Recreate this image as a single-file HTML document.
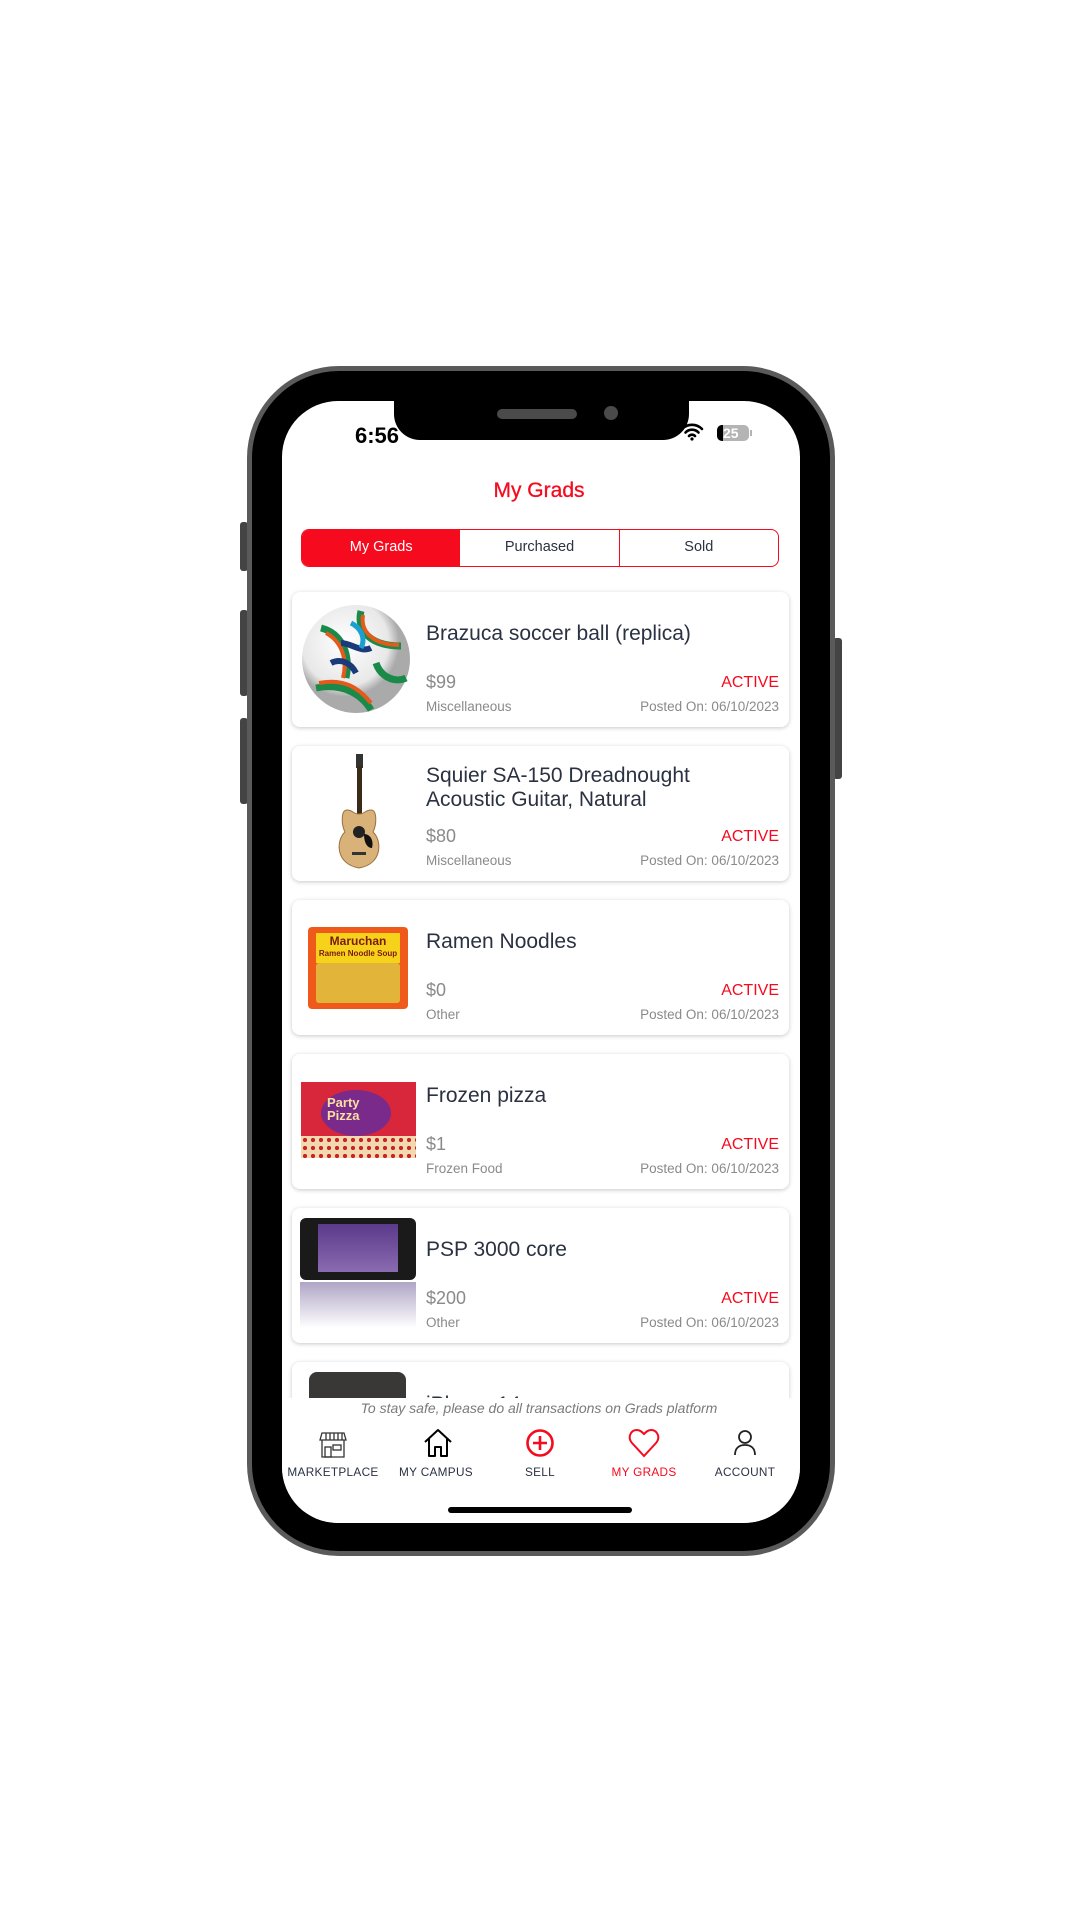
<!DOCTYPE html>
<html><head><meta charset="utf-8"><style>
*{margin:0;padding:0;box-sizing:border-box}
body{width:1080px;height:1920px;background:#fff;position:relative;overflow:hidden;font-family:"Liberation Sans",sans-serif}
.abs{position:absolute}
.frame{left:247px;top:366px;width:588px;height:1190px;border-radius:92px;background:#000;border:5px solid #5a5a5a}
.btn{background:#444;border-radius:3px}
.screen{left:282px;top:401px;width:518px;height:1122px;border-radius:56px;background:#fff;overflow:hidden}
.notch{left:112px;top:-2px;width:295px;height:41px;background:#000;border-radius:0 0 26px 26px}
.card{left:11px;width:497px;height:135px;background:#fff;border-radius:8px;box-shadow:0 1px 4px rgba(0,0,0,.22)}
.t{left:134px;font-size:21px;color:#2a3242;line-height:24px}
.p{left:134px;top:80px;font-size:18px;color:#8a8a8a}
.c{left:134px;top:107px;font-size:13.5px;color:#8a8a8a}
.a{right:10px;top:82px;font-size:16px;color:#f50a1e}
.d{right:10px;top:107px;font-size:13.5px;color:#8a8a8a}
.lbl{top:1064px;width:110px;text-align:center;font-size:11.8px;color:#2a3242;letter-spacing:.3px}
</style></head><body>
<div class="abs btn" style="left:240px;top:522px;width:8px;height:49px"></div>
<div class="abs btn" style="left:240px;top:610px;width:8px;height:86px"></div>
<div class="abs btn" style="left:240px;top:718px;width:8px;height:86px"></div>
<div class="abs btn" style="left:833px;top:638px;width:9px;height:141px"></div>
<div class="abs frame"></div>
<div class="abs screen">
 <div class="abs notch">
  <div class="abs" style="left:103px;top:10px;width:80px;height:10px;border-radius:5px;background:#4a4a4a"></div>
  <div class="abs" style="left:210px;top:7px;width:14px;height:14px;border-radius:7px;background:#4a4a4a"></div>
 </div>
 <div class="abs" style="left:73px;top:22px;font-size:22px;font-weight:bold;color:#000">6:56</div>
 <svg class="abs" style="left:398px;top:22px" width="24" height="18" viewBox="0 0 24 18"><path d="M2 6a14 14 0 0 1 20 0M5.5 9.5a9 9 0 0 1 13 0M9 13a4 4 0 0 1 6 0" stroke="#000" stroke-width="2.6" fill="none" stroke-linecap="round"/><circle cx="12" cy="16" r="1.6"/></svg>
 <div class="abs" style="left:435px;top:24px;width:32px;height:16px;border-radius:5px;background:#b4b4b4;overflow:hidden"><div style="width:6px;height:16px;background:#000"></div><div class="abs" style="left:6px;top:0;font-size:14px;font-weight:bold;color:#fff;line-height:16px">25</div></div>
 <div class="abs" style="left:468px;top:29px;width:2px;height:6px;background:#b4b4b4"></div>

 <div class="abs" style="left:-2px;width:518px;top:78px;text-align:center;font-size:21px;color:#f50a1e;-webkit-text-stroke:0.3px #f50a1e">My Grads</div>
 <div class="abs" style="left:19px;top:128px;width:478px;height:38px;border:1.5px solid #f50a1e;border-radius:8px;overflow:hidden;display:flex;font-size:14.5px;color:#2a3242">
  <div style="flex:1;background:#f50a1e;color:#fff;text-align:center;line-height:35px">My Grads</div>
  <div style="flex:1;text-align:center;line-height:35px;border-right:1.5px solid #f50a1e">Purchased</div>
  <div style="flex:1;text-align:center;line-height:35px">Sold</div>
 </div>

 <div class="abs" style="left:-1px;top:0;width:518px;height:997px;overflow:hidden">
 <div class="abs card" style="top:191px">
  <svg class="abs" style="left:9px;top:11px" width="110" height="112" viewBox="0 0 110 112"><defs><radialGradient id="g" cx="40%" cy="35%"><stop offset="0" stop-color="#fff"/><stop offset=".8" stop-color="#e8e8e8"/><stop offset="1" stop-color="#aaa"/></radialGradient></defs><circle cx="55" cy="56" r="54" fill="url(#g)"/><path d="M20 25c20 5 30 25 25 50M60 8c-5 20 10 35 40 35M15 85c25-5 45 5 55 22M75 60c5 15 20 20 30 15" stroke="#1a8a4a" stroke-width="7" fill="none"/><path d="M25 30c15 8 22 25 17 45M62 12c-3 18 12 30 36 30M18 80c25-5 40 5 52 20" stroke="#e35a1a" stroke-width="4" fill="none"/><path d="M40 40c10 0 20 10 30 5M30 60c10-5 20 0 25 10" stroke="#1a3a7a" stroke-width="6" fill="none"/><path d="M50 20c10 5 15 15 10 25" stroke="#1aa0d0" stroke-width="5" fill="none"/></svg>
  <div class="abs t" style="top:30px">Brazuca soccer ball (replica)</div>
  <div class="abs p">$99</div><div class="abs c">Miscellaneous</div>
  <div class="abs a">ACTIVE</div><div class="abs d">Posted On: 06/10/2023</div>
 </div>
 <div class="abs card" style="top:345px">
  <svg class="abs" style="left:42px;top:8px" width="50" height="118" viewBox="0 0 50 118"><rect x="22" y="0" width="7" height="14" fill="#333"/><rect x="23" y="12" width="5" height="48" fill="#3a2a1a"/><path d="M13 56c-6 0-6 14-2 22-9 8-10 32 14 36 24-4 23-28 14-36 4-8 4-22-2-22-6 0-6 4-12 4s-6-4-12-4z" fill="#d9b27a" stroke="#9a7040"/><circle cx="25" cy="78" r="6" fill="#222"/><path d="M30 80c6 0 10 6 8 14-4 0-8-4-8-14z" fill="#111"/><rect x="18" y="98" width="14" height="3" fill="#333"/></svg>
  <div class="abs t" style="top:18px">Squier SA-150 Dreadnought<br>Acoustic Guitar, Natural</div>
  <div class="abs p">$80</div><div class="abs c">Miscellaneous</div>
  <div class="abs a">ACTIVE</div><div class="abs d">Posted On: 06/10/2023</div>
 </div>
 <div class="abs card" style="top:499px">
  <div class="abs" style="left:16px;top:27px;width:100px;height:82px;background:#ef5a1a;border-radius:4px">
   <div class="abs" style="left:8px;top:6px;width:84px;height:30px;background:#f6d21a;font-size:12px;font-weight:bold;color:#7a1a10;text-align:center;line-height:11px;padding-top:3px">Maruchan<br><span style="font-size:8px">Ramen Noodle Soup</span></div>
   <div class="abs" style="left:8px;top:36px;width:84px;height:40px;background:#e3b43a;border-radius:3px"></div>
  </div>
  <div class="abs t" style="top:30px">Ramen Noodles</div>
  <div class="abs p">$0</div><div class="abs c">Other</div>
  <div class="abs a">ACTIVE</div><div class="abs d">Posted On: 06/10/2023</div>
 </div>
 <div class="abs card" style="top:653px">
  <div class="abs" style="left:9px;top:28px;width:115px;height:76px;background:#d8263a">
   <div class="abs" style="left:20px;top:8px;width:70px;height:46px;border-radius:50%;background:#7a2a8a"></div>
   <div class="abs" style="left:26px;top:14px;font-size:13px;font-weight:bold;color:#f6e0a0;line-height:13px">Party<br>Pizza</div>
   <div class="abs" style="left:0;top:54px;width:115px;height:22px;background:#f0d8b0;background-image:radial-gradient(#c22 35%,transparent 40%);background-size:8px 8px"></div>
  </div>
  <div class="abs t" style="top:30px">Frozen pizza</div>
  <div class="abs p">$1</div><div class="abs c">Frozen Food</div>
  <div class="abs a">ACTIVE</div><div class="abs d">Posted On: 06/10/2023</div>
 </div>
 <div class="abs card" style="top:807px">
  <div class="abs" style="left:8px;top:10px;width:116px;height:62px;background:#1a1a1a;border-radius:6px">
   <div class="abs" style="left:18px;top:6px;width:80px;height:48px;background:linear-gradient(#5a3a8a,#8a6ab0)"></div>
  </div>
  <div class="abs" style="left:8px;top:74px;width:116px;height:46px;background:linear-gradient(rgba(110,90,150,.55),rgba(255,255,255,0))"></div>
  <div class="abs t" style="top:30px">PSP 3000 core</div>
  <div class="abs p">$200</div><div class="abs c">Other</div>
  <div class="abs a">ACTIVE</div><div class="abs d">Posted On: 06/10/2023</div>
 </div>
 <div class="abs card" style="top:961px">
  <div class="abs" style="left:17px;top:10px;width:97px;height:60px;background:#3a3836;border-radius:8px"></div>
  <div class="abs t" style="top:31px">iPhone 14</div>
 </div>
 </div>

 <div class="abs" style="left:0;top:997px;width:518px;height:125px;background:#fff"></div>
 <div class="abs" style="left:-2px;top:999px;width:518px;text-align:center;font-size:14px;font-style:italic;color:#7a7a7a">To stay safe, please do all transactions on Grads platform</div>
 <svg class="abs" style="left:36px;top:1029px" width="30" height="30" viewBox="0 0 30 30" fill="none" stroke="#333" stroke-width="1.3"><path d="M4 3h22l2 7H2z"/><path d="M8 3v7M12 3v7M16 3v7M20 3v7M24 3v7"/><path d="M4 10v17h22V10"/><rect x="7" y="17" width="6" height="10"/><rect x="15" y="15" width="8" height="5"/></svg>
 <svg class="abs" style="left:140px;top:1026px" width="32" height="32" viewBox="0 0 32 32" fill="none" stroke="#000" stroke-width="2" stroke-linejoin="round"><path d="M3 15L16 3l13 12M7 12v17h6v-9h6v9h6V12"/></svg>
 <svg class="abs" style="left:243px;top:1027px" width="30" height="30" viewBox="0 0 30 30" fill="none" stroke="#f50a1e" stroke-width="2.6"><circle cx="15" cy="15" r="12.5"/><path d="M15 8v14M8 15h14"/></svg>
 <svg class="abs" style="left:346px;top:1027px" width="32" height="30" viewBox="0 0 32 30" fill="none" stroke="#f50a1e" stroke-width="2"><path d="M16 28L4 15C-1 9 3 2 9 2c3 0 5 2 7 4 2-2 4-4 7-4 6 0 10 7 5 13z"/></svg>
 <svg class="abs" style="left:451px;top:1028px" width="24" height="28" viewBox="0 0 24 28" fill="none" stroke="#222" stroke-width="1.8"><circle cx="12" cy="8" r="6"/><path d="M2 26c0-7 4-10 10-10s10 3 10 10"/></svg>
 <div class="abs lbl" style="left:-4px">MARKETPLACE</div>
 <div class="abs lbl" style="left:99px">MY CAMPUS</div>
 <div class="abs lbl" style="left:203px">SELL</div>
 <div class="abs lbl" style="left:307px;color:#f50a1e">MY GRADS</div>
 <div class="abs lbl" style="left:408px">ACCOUNT</div>
 <div class="abs" style="left:166px;top:1106px;width:184px;height:6px;border-radius:3px;background:#000"></div>
</div>
</body></html>
